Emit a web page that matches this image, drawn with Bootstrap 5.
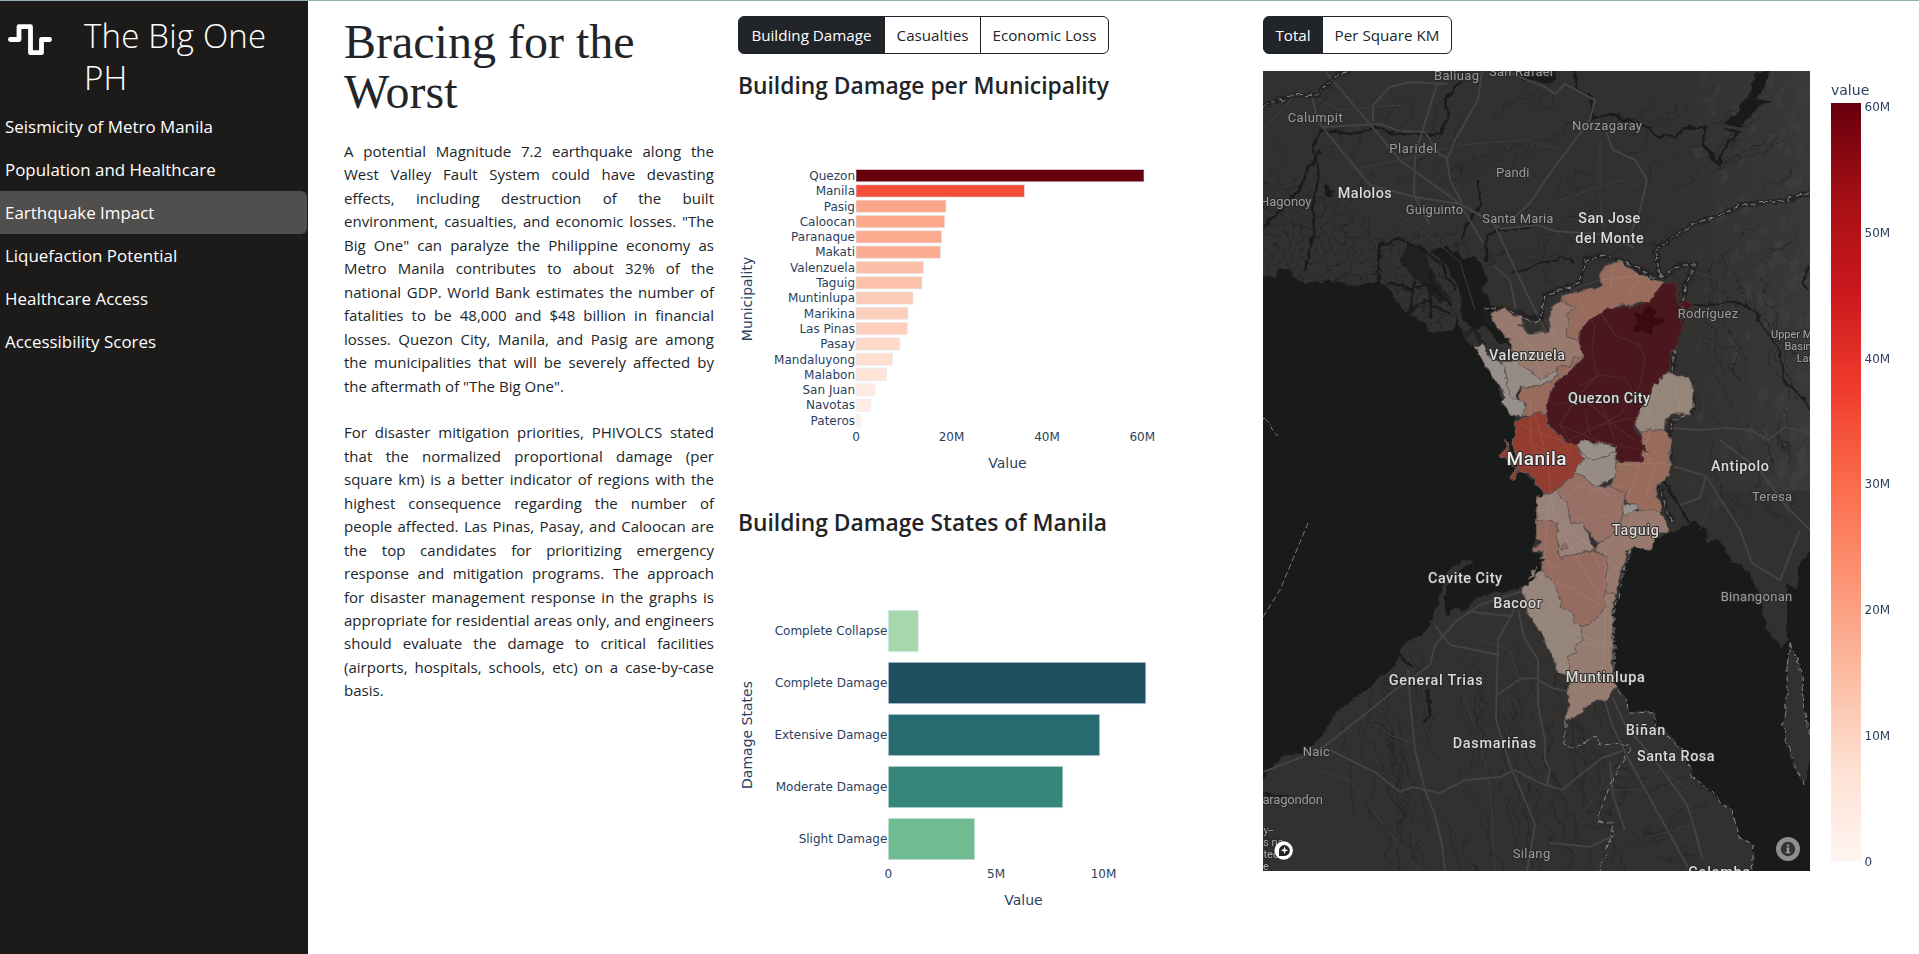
<!DOCTYPE html>
<html lang="en">
<head>
<meta charset="utf-8">
<title>The Big One PH</title>
<link href="https://cdn.jsdelivr.net/npm/bootstrap@5.3.0/dist/css/bootstrap.min.css" rel="stylesheet">
<style>
body{font-family:"Open Sans","Noto Sans",sans-serif;color:#212529;height:954px;overflow:hidden;border-top:1px solid #8fb1b3;background:#fff}
.side{width:308px;background:#1d1b1a;height:953px}
.brand-row{height:104px;padding:14px 8px 0 8px}
.brand-row h1{font-weight:300;font-size:33px;line-height:42px;letter-spacing:.2px;margin:0 0 0 32px;width:200px}
.brand-row svg{margin-top:8px}
.side .nav-link{color:#fff;font-size:16.9px;line-height:27px;padding:8px 5px;border-radius:0 6px 6px 0;margin-right:1px;letter-spacing:.02px}
.side .nav-link.active{background:#514f4d}
.story{width:370px;margin-left:36px}
.story h2{font-family:"Liberation Serif",serif;font-size:48px;line-height:50px;font-weight:400;margin:16px 0 23px;height:100px}
.story p{font-size:15px;line-height:23.45px;margin:0 0 23.4px;letter-spacing:.02px;text-align:justify;text-align-last:justify;white-space:nowrap}
.story p .tail{display:block;text-align-last:left}
.charts{width:501px;margin-left:24px}
.btn-group{height:38px;margin-top:15px}
.btn-group .btn{font-size:15.2px;padding:0;line-height:35px;flex:none}
.w147{width:147px}.w96{width:97px}.w128{width:129px}.w60{width:60px}.w129{width:130px}
.btn.active{background:#212529!important}
.charts h3{font-size:22.8px;font-weight:600;line-height:30px;margin:0;letter-spacing:0;white-space:nowrap;padding-top:1px;height:30px}
.plot text,.scale text{font-family:"DejaVu Sans",Verdana,sans-serif;font-size:12px;fill:#2a3f5f}
.plot text.axis,.scale text.axis{font-size:14px}
svg{display:block;flex:none}
svg filter{color-interpolation-filters:sRGB}
.places text{font-family:Roboto,sans-serif;font-size:13px;fill:#9c9b9a;paint-order:stroke;stroke:#2a2928;stroke-width:2px;stroke-linejoin:round}
.places .city{font-size:14.4px;font-weight:500;fill:#dbdad9}
.places .capital{font-size:19px;font-weight:500;fill:#eee}
.places .tiny{font-size:11px;fill:#a9a8a7}
</style>
</head>
<body>
<div class="d-flex">
<nav class="side flex-shrink-0">
  <div class="brand-row d-flex align-items-start text-white">
    <svg width="44" height="34" viewBox="0 0 44 34" fill="none" stroke="#fff" stroke-width="4.8" stroke-linejoin="round" stroke-linecap="round"><path d="M2.400 16.500H11V3.700H22.500V29.700H33.500V16.500H41.600"/></svg>
    <h1>The Big One PH</h1>
  </div>
  <div class="nav flex-column">
    <a class="nav-link">Seismicity of Metro Manila</a>
    <a class="nav-link">Population and Healthcare</a>
    <a class="nav-link active">Earthquake Impact</a>
    <a class="nav-link">Liquefaction Potential</a>
    <a class="nav-link">Healthcare Access</a>
    <a class="nav-link">Accessibility Scores</a>
  </div>
</nav>
<section class="story flex-shrink-0">
  <h2>Bracing for the<br>Worst</h2>
  <p>A potential Magnitude 7.2 earthquake along the<br>West Valley Fault System could have devasting<br>effects, including destruction of the built<br>environment, casualties, and economic losses. "The<br>Big One" can paralyze the Philippine economy as<br>Metro Manila contributes to about 32% of the<br>national GDP. World Bank estimates the number of<br>fatalities to be 48,000 and $48 billion in financial<br>losses. Quezon City, Manila, and Pasig are among<br>the municipalities that will be severely affected by<span class="tail">the aftermath of "The Big One".</span></p>
  <p>For disaster mitigation priorities, PHIVOLCS stated<br>that the normalized proportional damage (per<br>square km) is a better indicator of regions with the<br>highest consequence regarding the number of<br>people affected. Las Pinas, Pasay, and Caloocan are<br>the top candidates for prioritizing emergency<br>response and mitigation programs. The approach<br>for disaster management response in the graphs is<br>appropriate for residential areas only, and engineers<br>should evaluate the damage to critical facilities<br>(airports, hospitals, schools, etc) on a case-by-case<span class="tail">basis.</span></p>
</section>
<section class="charts flex-shrink-0">
  <div class="btn-group"><button class="btn btn-outline-dark active w147">Building Damage</button><button class="btn btn-outline-dark w96">Casualties</button><button class="btn btn-outline-dark w128">Economic Loss</button></div>
  <h3 class="mt-3">Building Damage per Municipality</h3>
  <svg class="plot" id="muni" width="480" height="407" viewBox="738 100 480 407">
    <text class="axis" x="1007.500" y="468" text-anchor="middle">Value</text>
    <text class="axis" transform="translate(752 299) rotate(-90)" text-anchor="middle">Municipality</text>
  </svg>
  <h3>Building Damage States of Manila</h3>
  <svg class="plot" id="states" width="480" height="415" viewBox="738 537 480 415">
    <text class="axis" x="1023.500" y="905" text-anchor="middle">Value</text>
    <text class="axis" transform="translate(752 735) rotate(-90)" text-anchor="middle">Damage States</text>
  </svg>
</section>
<section class="ms-4 flex-shrink-0">
  <div class="btn-group"><button class="btn btn-outline-dark active w60">Total</button><button class="btn btn-outline-dark w129">Per Square KM</button></div>
  <div class="d-flex mt-3 pt-0">
  <svg style="margin-top:1px" width="547" height="800" viewBox="1263 71 547 800">
    <defs>
      <filter id="rough" filterUnits="userSpaceOnUse" x="1250" y="60" width="580" height="830"><feTurbulence type="fractalNoise" baseFrequency=".11" numOctaves="3" seed="4"/><feDisplacementMap in="SourceGraphic" scale="7" xChannelSelector="R" yChannelSelector="G"/></filter>
      <filter id="bend" filterUnits="userSpaceOnUse" x="1250" y="60" width="580" height="830"><feTurbulence type="fractalNoise" baseFrequency=".04" numOctaves="4" seed="9"/><feDisplacementMap in="SourceGraphic" scale="22" xChannelSelector="R" yChannelSelector="G"/></filter>
      <pattern id="ponds" width="22" height="26" patternUnits="userSpaceOnUse"><path d="M0 5L7 0L13 6L22 5M13 6L11 14L18 20L22 18M11 14L3 17L0 12M3 17L5 26M18 20L16 26" fill="none" stroke="#242423"/></pattern>
      <linearGradient id="east"><stop offset="0" stop-color="#3b3a39" stop-opacity="0"/><stop offset="1" stop-color="#3d3c3b" stop-opacity=".7"/></linearGradient>
    </defs>
    <rect x="1263" y="71" width="547" height="800" fill="#333130"/>
    <rect x="1670" y="71" width="140" height="420" fill="url(#east)"/>
    <!-- hill shading -->
    <g id="hills" fill="#4b4a49" opacity=".4" filter="url(#rough)"></g>
    <!-- ponds and minor streams -->
    <g filter="url(#bend)">
      <path d="M1250 170L1300 180L1340 200L1380 235L1455 230L1475 260L1460 340L1400 320L1380 290L1250 285z" fill="url(#ponds)"/>
      <g id="streams" fill="none" stroke="#282726" stroke-width="1"></g>
    </g>
    <!-- sea and lake -->
    <g filter="url(#rough)" fill="#191b1a">
      <path d="M1250 278L1276 277L1278 269L1289 269L1293 277L1305 283L1322 283L1327 280L1352 286L1378 282L1389 285L1393 298L1410 315L1425 323L1429 332L1442 333L1455 328L1457 318L1463 337L1474 347L1489 367L1506 407L1515 420L1515 440L1523 470L1544 493L1537 498L1537 527L1532 550L1546 559L1540 573L1523 587L1502 592L1474 598L1470 608L1463 612L1456 606L1446 616L1444 600L1448 585L1458 570L1474 562L1470 559L1452 566L1446 582L1440 597L1433 617L1425 633L1405 643L1397 660L1387 672L1367 690L1347 703L1333 717L1320 738L1303 753L1283 757L1263 777L1245 790z"/>
      <path d="M1635 547L1650 548L1653 540L1670 533L1690 523L1693 520L1707 530L1708 542L1718 540L1732 560L1749 573L1757 590L1763 610L1766 628L1772 637L1782 648L1787 640L1787 585L1798 588L1798 567L1815 544L1830 880L1753 880L1754 845L1740 837L1732 813L1707 790L1693 777L1682 750L1667 733L1653 723L1655 713L1627 710L1627 697L1618 688L1612 670L1613 613L1622 583L1627 560z"/>
      <path d="M1448 247L1463 258L1470 255L1482 264L1488 277L1482 290L1493 305L1505 325L1512 345L1500 345L1485 325L1475 330L1462 318L1460 290L1447 266L1430 250z"/>
      <path d="M1408 240L1425 250L1430 268L1440 285L1452 300L1440 303L1425 288L1412 275L1400 262z" opacity=".7"/>
      <path d="M1756 72L1770 71L1765 85L1757 100L1772 101L1755 110L1748 118L1740 128L1722 122L1735 115L1740 104L1748 96z"/>
      <path d="M1515 71L1555 71L1557 80L1545 84L1535 80L1522 81z"/>
      <path d="M1324 184L1335 191L1330 197L1324 193z"/>
    </g>
    <path filter="url(#rough)" d="M1790 642L1800 667L1805 713L1812 740L1808 770L1803 785L1790 753L1782 723L1787 713L1787 667z" fill="#333130"/>
    <g filter="url(#rough)" fill="none" stroke="#191b1a" stroke-width="2.500">
      <path d="M1263 227L1280 210L1300 190L1307 170L1320 150M1322 130L1313 146L1319 175L1313 210L1312 240L1305 270M1323 130L1350 134L1377 127L1390 133L1415 134L1440 134L1448 117L1445 100L1462 80"/>
      <path d="M1378 285L1380 245L1400 240L1420 247L1440 262L1455 290M1390 283L1410 290L1430 284L1450 305M1400 320L1425 300L1450 315M1415 280L1410 310M1430 270L1432 320M1462 240L1466 225L1480 205L1478 180M1487 262L1487 235L1500 230L1540 225"/>
      <path d="M1575 71L1577 90L1593 100L1592 118L1610 115L1632 120L1650 128L1655 135L1675 137L1685 127L1705 128L1703 145L1720 165L1722 150L1738 133L1724 130"/>
      <path stroke-width="1.800" d="M1512 274L1540 263L1562 258L1575 264M1690 305L1735 302L1755 312L1765 330L1780 350L1785 380L1800 395L1810 410M1810 265L1803 280L1808 290"/>
      <path d="M1427 690L1430 715L1425 722M1400 655L1412 667M1263 795L1290 797M1663 480L1690 523"/>
    </g>
    <!-- roads -->
    <g fill="none" stroke="#434343" stroke-width="2">
      <path d="M1325 71L1400 160L1460 204L1483 243M1460 204L1493 222L1530 300L1555 350M1312 95L1317 120L1345 155L1370 185L1415 197L1460 204L1500 228"/>
      <path d="M1323 127L1380 124L1400 131L1425 132L1440 155L1448 158M1373 122L1373 105L1390 87L1410 82L1447 84M1437 84L1415 155L1414 195L1430 225M1482 71L1478 100L1455 140L1447 160L1450 180L1462 203M1505 71L1545 87L1555 94L1565 84L1595 100L1590 120L1556 165L1530 203L1515 217"/>
      <path d="M1606 132L1613 150L1635 160L1647 180L1640 210L1630 235M1500 229L1537 225L1555 231L1610 235L1634 248M1494 266L1510 280L1516 310L1530 340"/>
      <path d="M1263 772L1320 750L1395 690L1430 665L1435 645L1455 622L1480 605L1525 590L1545 582M1472 612L1510 616M1435 625L1450 645L1500 655M1408 670L1410 700L1415 750L1425 790L1435 815L1442 845L1445 871M1515 608L1498 640L1496 720L1510 765L1525 800L1535 825L1527 871M1518 610L1524 637L1538 660L1538 705L1545 740L1545 760L1550 770L1547 785"/>
      <path d="M1330 750L1360 765L1375 772L1400 792L1412 787L1440 793L1465 780L1500 777L1515 770L1540 783L1562 790L1580 775L1602 758L1625 750M1496 696L1520 679L1535 678L1552 688L1570 692M1604 698L1612 725L1630 762L1690 871M1613 698L1625 725L1655 760L1687 805L1695 830L1702 858M1610 762L1613 795L1625 830M1550 843L1590 847L1615 835"/>
      <path d="M1669 465L1706 476L1740 530L1752 563L1780 580L1800 530M1706 476L1700 498L1680 505M1672 428L1700 430L1725 428L1750 430L1768 440L1785 427L1810 433M1720 440L1760 470L1785 505L1810 530"/>
    </g>
    <g fill="none" stroke="#3d3d3c" stroke-width="1">
      <path d="M1263 130L1300 90L1340 110L1400 105M1350 170L1400 160L1460 145L1525 140L1560 150M1400 215L1440 245L1460 262L1475 310M1560 200L1620 180L1640 190M1600 140L1600 200L1605 230M1480 640L1510 650L1520 680L1500 715M1370 720L1390 735L1415 745M1320 770L1350 780L1380 820L1420 871M1460 690L1480 740L1490 790L1495 871M1600 790L1640 790L1660 770L1690 790M1640 840L1690 825M1720 480L1700 530M1690 270L1720 280L1720 310M1740 290L1780 300L1800 320M1577 820L1600 790L1605 770"/>
    </g>
    <!-- provincial borders -->
    <g filter="url(#rough)" fill="none" stroke="#1f1f1f" stroke-width="5" opacity=".7"><path d="M1263 107L1290 96L1318 95L1335 75L1350 71M1481 308L1500 335M1483 307L1510 311L1540 320L1545 295L1580 283L1585 260L1600 255L1625 262L1655 277L1665 275L1680 265L1695 265L1685 285L1682 320L1674 350L1672 370M1660 277L1655 250L1690 226L1745 204L1780 201L1810 193M1665 375L1690 382L1694 400L1690 414M1673 420L1668 440L1672 465L1660 485L1665 505L1672 520M1463 337L1473 330L1485 345"/></g>
    <g filter="url(#rough)" fill="none" stroke="#888" stroke-width="1" stroke-dasharray="6 3"><path d="M1263 107L1290 96L1318 95L1335 75L1350 71M1483 307L1510 311L1530 322L1540 320L1545 295L1580 283L1585 260L1600 255L1625 262L1655 277L1665 275L1680 265L1695 265L1685 285L1682 320L1674 350L1672 370M1660 277L1655 250L1690 226L1745 204L1780 201L1810 193M1665 375L1690 382L1694 400L1690 414L1673 420L1668 440L1672 465L1660 485L1665 505L1672 520M1263 419L1280 438M1618 690L1627 700L1628 712L1655 713L1655 725L1682 750L1693 777L1712 792L1732 813L1740 837L1754 845L1752 871M1565 722L1565 745L1570 750L1595 737L1600 745L1625 743L1630 750L1610 785L1597 820L1614 825L1600 871M1790 642L1800 667L1805 713L1812 740M1803 785L1790 753L1782 723L1787 713L1787 667L1790 642M1630 548L1621 590L1614 613L1614 680"/></g>
    <path d="M1263 617L1280 590L1308 523" fill="none" stroke="#777" stroke-dasharray="6 3"/>
    <!-- municipalities -->
    <g filter="url(#rough)">
    <g transform="translate(1440 240) scale(.33333)" stroke="#655a56" stroke-width="3" stroke-linejoin="round">
      <path fill="#976c5d" d="M370 168L488 138L480 100L495 75L540 62L570 90L620 108L675 130L630 185L500 205L450 240L420 270L420 300L382 295L375 270L390 255L378 220L403 205L365 185z"/>
      <path fill="#98796d" d="M152 225L190 205L215 225L250 228L250 250L235 255L265 280L325 275L330 210L365 185L403 205L378 220L390 255L375 270L382 295L420 300L435 345L400 355L395 372L350 378L345 395L305 415L265 390L235 365L215 325L205 295L180 275z"/>
      <path fill="#978b85" d="M175 365L235 365L265 390L305 415L352 390L352 412L300 440L245 440L228 460L235 485L205 470L190 420z"/>
      <path fill="#96908d" d="M103 325L130 310L150 350L190 375L200 420L210 470L245 485L255 500L245 530L215 525L185 490L200 478L180 440L140 380z"/>
      <path fill="#976c5d" d="M395 372L400 355L435 345L380 400L345 430L320 518L250 525L255 490L240 485L245 442L300 440L352 412L352 378z"/>
      <path fill="#96857a" d="M655 435L670 405L700 400L745 412L765 450L750 525L700 520L675 540L672 572L630 570L600 575L582 550L600 510L625 465L640 430z"/>
      <path fill="#976c5d" d="M600 575L630 568L680 575L695 600L688 625L692 670L688 705L650 740L655 760L650 770L665 795L655 817L600 815L590 790L555 782L557 762L510 738L525 715L530 662L608 665L605 630L628 635L605 610z"/>
      <path fill="#4a171e" stroke="#4d3436" d="M675 130L710 125L716 150L710 175L722 190L728 260L715 300L712 325L695 328L690 370L685 390L670 405L655 435L640 430L625 470L600 510L580 550L585 580L600 590L605 610L625 632L605 630L608 665L530 662L530 620L490 610L465 612L440 600L420 598L405 615L315 555L320 515L345 430L380 400L435 350L420 315L420 270L450 240L500 205L600 198L630 185zM722 195L740 178L758 195L740 215z"/>
      <path fill="#390b11" stroke="none" d="M580 275L590 240L580 220L605 225L615 205L630 200L645 215L640 230L675 235L660 255L640 262L635 280L605 275z"/>
      <path fill="#978f8a" d="M420 598L440 600L465 612L490 610L530 620L530 632L500 650L465 663L430 640L405 615z"/>
      <path fill="#978c84" d="M430 640L465 663L500 650L530 632L525 715L465 737L405 700L428 655L410 625z"/>
      <path fill="#923d30" d="M228 545L290 517L320 520L315 555L405 615L428 655L405 700L350 750L312 762L270 700L235 690L220 600zM195 595L205 605L207 640L225 680L240 685L220 718L215 715L225 685L200 650L178 645L195 630z"/>
    </g>
    <g transform="translate(1440 480) scale(.33333)" stroke="#655a56" stroke-width="3" stroke-linejoin="round">
      <path fill="#98796d" d="M462 208L475 188L520 165L545 105L600 95L645 92L670 110L690 155L650 160L630 208L580 200L560 210L545 280L525 340L495 337L500 232z"/>
      <path fill="#987065" d="M350 35L405 -20L465 17L510 18L557 42L550 75L545 105L520 165L475 188L455 170L430 130L395 130L380 70z"/>
      <path fill="#988279" d="M290 52L348 32L380 70L395 130L430 130L462 208L365 232L355 220L350 125L290 125z"/>
      <path fill="#976c60" d="M290 125L350 125L355 220L365 232L462 212L500 232L495 380L475 410L430 440L405 430L400 405L360 378L358 335L330 295L300 270L318 230L298 240L310 215L278 208L305 185L288 178zM360 200L375 192L385 205L365 212z"/>
      <path fill="#96857a" d="M300 270L330 295L358 335L360 378L400 405L405 430L428 442L425 480L390 530L388 600L360 580L330 520L300 450L262 405L260 370L248 330zM290 258L268 290L265 295L282 285z"/>
      <path fill="#967c70" d="M495 335L525 340L518 400L515 600L532 620L500 660L470 660L378 727L388 600L390 530L425 480L428 442L475 410L495 380z"/>
      <path fill="#979390" d="M550 70L590 68L595 85L560 112L545 95z"/>
    </g>
    </g>
    <!-- city streets -->
    <g fill="none" stroke="#fff" stroke-opacity=".07" stroke-width="1.200">
      <path d="M1580 300L1582 310L1595 325L1592 350L1597 375L1575 400L1560 425L1572 445M1600 312L1615 335L1640 345L1645 360L1640 385L1620 415L1600 425M1580 385L1600 375L1625 378L1635 395M1555 405L1585 400L1620 430L1635 440M1570 440L1600 425L1632 418M1560 425L1595 440L1640 450M1600 400L1615 440M1585 410L1590 435M1530 400L1531 440L1545 470M1520 425L1560 440L1575 460M1525 440L1570 462M1535 415L1548 460L1550 490M1520 455L1560 450M1515 330L1530 345L1545 385M1545 320L1560 345M1505 350L1530 355L1560 350M1570 290L1600 280L1645 275M1615 262L1610 290M1640 280L1625 300M1675 385L1680 410M1650 420L1645 400L1665 390M1620 465L1665 463M1650 430L1635 480L1625 500M1640 440L1655 470L1645 500M1570 485L1600 490L1625 485M1560 500L1590 480L1615 500M1575 510L1600 485M1570 520L1610 515M1550 490L1555 520L1590 580L1604 602M1560 525L1590 545L1600 570M1540 510L1560 512M1548 500L1545 560L1560 570M1550 580L1575 590L1600 605M1525 605L1570 630L1605 645M1545 595L1560 620M1605 550L1605 650L1600 685M1575 640L1605 648M1595 680L1575 690"/>
    </g>
    <g class="places">
      <text x="1434" y="80" textLength="45">Baliuag</text><text x="1489" y="76" textLength="64">San Rafael</text>
      <text x="1287.700" y="121.700" textLength="55">Calumpit</text><text x="1389.300" y="153.300" textLength="47.500">Plaridel</text>
      <text x="1496" y="177" textLength="33.500">Pandi</text><text x="1260" y="206.300" textLength="51.500">Hagonoy</text>
      <text x="1405.700" y="213.700" textLength="57.500">Guiguinto</text><text x="1482.300" y="222.700" textLength="71">Santa Maria</text>
      <text x="1572" y="130.300" textLength="70">Norzagaray</text><text x="1677.700" y="317.700" textLength="60.500">Rodríguez</text>
      <text x="1752" y="501" textLength="40">Teresa</text><text x="1720.700" y="600.700" textLength="71.500">Binangonan</text>
      <text x="1302.700" y="755.700" textLength="27">Naic</text><text x="1262.500" y="803.700" textLength="60.500">aragondon</text>
      <text x="1512.700" y="857.700" textLength="37.500">Silang</text>
      <text class="tiny" x="1771" y="337.700">Upper M</text><text class="tiny" x="1784.400" y="349.700">Basin</text><text class="tiny" x="1796.700" y="361.700">Lar</text>
      <text class="tiny" x="1263.500" y="833.500" textLength="11">y–</text><text class="tiny" x="1263" y="846">s na</text><text class="tiny" x="1263.500" y="858">tec</text><text class="tiny" x="1263" y="870">e</text>
      <text class="city" x="1337.700" y="198.300" textLength="54">Malolos</text><text class="city" x="1578.300" y="223.300" textLength="62">San Jose</text><text class="city" x="1575.300" y="242.700" textLength="68.500">del Monte</text>
      <text class="city" x="1489" y="360" textLength="76">Valenzuela</text><text class="city" x="1568" y="403.300" textLength="82">Quezon City</text>
      <text class="city" x="1711" y="471.300" textLength="58">Antipolo</text><text class="city" x="1612" y="535.300" textLength="47">Taguig</text>
      <text class="city" x="1428" y="582.700" textLength="74">Cavite City</text><text class="city" x="1493.300" y="608" textLength="48.500">Bacoor</text>
      <text class="city" x="1388.700" y="685" textLength="94">General Trias</text><text class="city" x="1452.700" y="748" textLength="83.500">Dasmariñas</text>
      <text class="city" x="1565.700" y="682" textLength="79">Muntinlupa</text><text class="city" x="1625.700" y="735.300" textLength="39.500">Biñan</text>
      <text class="city" x="1637" y="761" textLength="77.500">Santa Rosa</text><text class="city" x="1688.300" y="876.500" textLength="62">Calamba</text>
      <text class="capital" x="1506.500" y="464.700" textLength="60">Manila</text>
    </g>
    <circle cx="1283.700" cy="850.500" r="9.200" fill="#fff"/><path d="M1279 856V850.500A5.400 5.400 0 1 1 1284.500 855.900z" fill="#222"/><path d="M1284.500 846.500l1 2.700l2.700 1l-2.700 1l-1 2.700l-1 -2.700l-2.700 -1l2.700 -1z" fill="#fff"/>
    <circle cx="1788" cy="849" r="12" fill="#8c8d8d"/><circle cx="1788" cy="849" r="7.200" fill="#333"/><path d="M1786.200 847.400h2.900v4.400h1.200v1.400h-4.600v-1.400h1.200v-3h-.7z" fill="#9a9b9b"/><circle cx="1788" cy="845.400" r="1.200" fill="#9a9b9b"/>
  </svg>
  <svg class="scale" width="109" height="800" viewBox="1810 70 109 800">
    <defs><linearGradient id="reds" x1="0" y1="1" x2="0" y2="0"><stop offset="0" stop-color="#fff5f0"/><stop offset=".125" stop-color="#fee0d2"/><stop offset=".25" stop-color="#fcbba1"/><stop offset=".375" stop-color="#fc9272"/><stop offset=".5" stop-color="#fb6a4a"/><stop offset=".625" stop-color="#ef3b2c"/><stop offset=".75" stop-color="#cb181d"/><stop offset=".875" stop-color="#a50f15"/><stop offset="1" stop-color="#67000d"/></linearGradient></defs>
    <rect x="1831" y="103" width="30" height="758" fill="url(#reds)"/>
    <text class="axis" x="1831" y="95">value</text>
    <g id="ticks"></g>
  </svg>
  </div>
</section>
</div>
<script src="https://cdn.jsdelivr.net/npm/bootstrap@5.3.0/dist/js/bootstrap.bundle.min.js"></script>
<script>
const NS = 'http://www.w3.org/2000/svg';
function add(parent, tag, attrs, text) {
  const e = document.createElementNS(NS, tag);
  for (const k in attrs) e.setAttribute(k, attrs[k]);
  if (text) e.textContent = text;
  parent.appendChild(e);
}
function bars(id, rows, x0, y0, pitch, h) {
  const svg = document.getElementById(id);
  rows.forEach(([name, w, color], i) => {
    const y = y0 + i * pitch;
    add(svg, 'rect', {x: x0, y: y, width: w, height: h, fill: color, stroke: '#e5ecf6', 'stroke-opacity': .6, 'stroke-width': 1});
    add(svg, 'text', {x: x0 - 1, y: y + h / 2 + 4.3, 'text-anchor': 'end'}, name);
  });
}
function axis(id, y, items) {
  items.forEach(([x, t]) => add(document.getElementById(id), 'text', {x, y, 'text-anchor': 'middle'}, t));
}
bars('muni', [['Quezon',288,'#67000d'],['Manila',168.5,'#f44d38'],['Pasig',90,'#fca689'],['Caloocan',88.7,'#fca88b'],['Paranaque',85.6,'#fcab8f'],['Makati',84.5,'#fcac90'],['Valenzuela',67.5,'#fcc0a8'],['Taguig',66,'#fcc1a9'],['Muntinlupa',57,'#fccab6'],['Marikina',52,'#fdcfbc'],['Las Pinas',51.5,'#fdcfbc'],['Pasay',43.7,'#fdd7c8'],['Mandaluyong',36.6,'#fedfd0'],['Malabon',30.6,'#fee3d7'],['San Juan',19,'#feeae1'],['Navotas',14.6,'#ffece4'],['Pateros',5,'#fff2ec']], 856, 169.5, 15.3, 12.3);
axis('muni', 441, [[856,'0'],[951.5,'20M'],[1047,'40M'],[1142.3,'60M']]);
bars('states', [['Complete Collapse',30,'#a5d9ac'],['Complete Damage',257.5,'#1f4f5f'],['Extensive Damage',211.4,'#276b70'],['Moderate Damage',174.5,'#36877a'],['Slight Damage',86.4,'#6ebc90']], 888.3, 610.3, 52, 41.4);
axis('states', 878, [[888.3,'0'],[996,'5M'],[1103.5,'10M']]);
['60M','50M','40M','30M','20M','10M','0'].forEach((t, i) => add(document.getElementById('ticks'), 'text', {x: 1864.5, y: 111.3 + i * 125.7}, t));

// Terrain: repeatable scatter of hill facets and creeks
let seed = 7;
const rnd = () => (seed = (seed * 16807) % 2147483647) / 2147483647;
const hills = document.getElementById('hills'), streams = document.getElementById('streams');
for (let i = 0; i < 130; i++) {
  const x = 1690 + rnd() * 120, y = 75 + rnd() * 440, s = 3 + rnd() * 6;
  add(hills, 'path', {d: `M${x} ${y}l${s} ${-s}l${s * .3} ${s * 1.6}l${-s} ${s}z`, opacity: .3 + rnd() * .6});
}
function creek(x, y, dx, dy, n) {
  let d = `M${x} ${y}`;
  for (let i = 0; i < n; i++) d += `l${dx + (rnd() - .5) * 10} ${dy + (rnd() - .5) * 8}`;
  add(streams, 'path', {d});
}
for (let i = 0; i < 60; i++) creek(1340 + rnd() * 280, 640 + rnd() * 200, 2, 9, 5 + rnd() * 7);
for (let i = 0; i < 45; i++) creek(1500 + rnd() * 300, 80 + rnd() * 200, -6, 4, 4 + rnd() * 4);
for (let i = 0; i < 35; i++) creek(1690 + rnd() * 110, 240 + rnd() * 260, 3, 6, 4 + rnd() * 4);
for (let i = 0; i < 15; i++) creek(1620 + rnd() * 100, 770 + rnd() * 90, -7, 3, 5);
for (let i = 0; i < 14; i++) creek(1270 + rnd() * 200, 80 + rnd() * 90, -4, 6, 5);
</script>
</body>
</html>
